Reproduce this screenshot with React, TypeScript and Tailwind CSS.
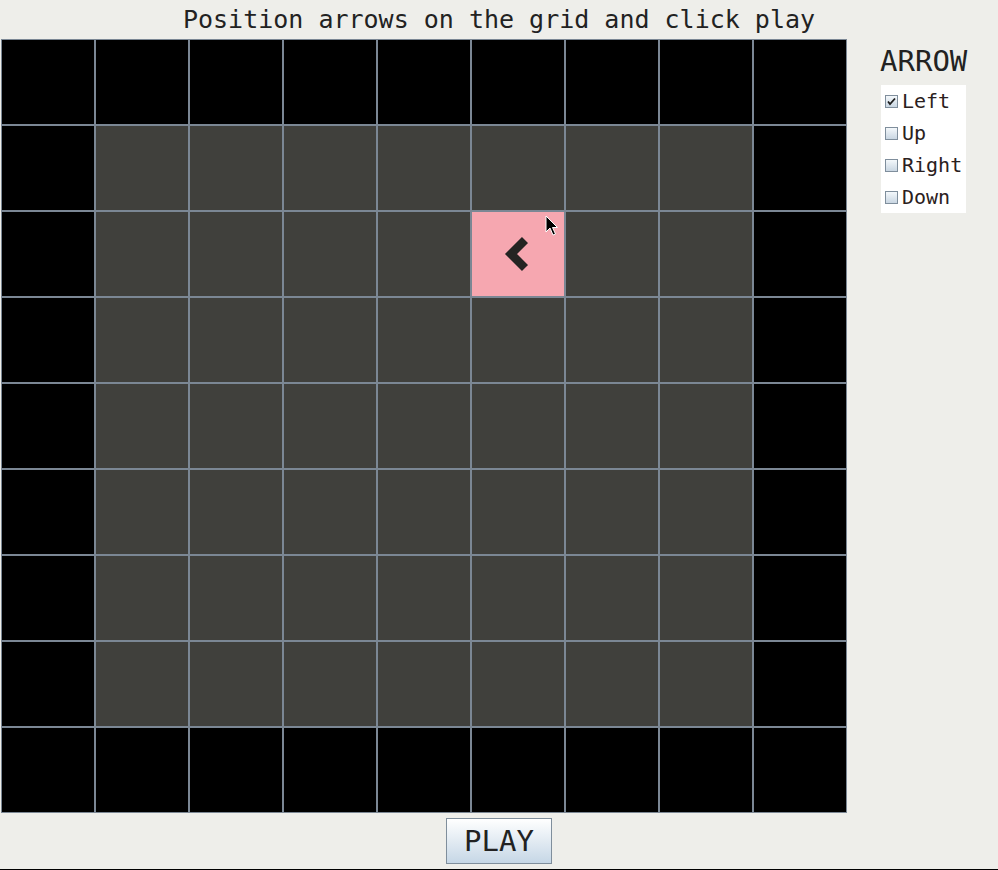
import React, { useState } from "react";

const ROWS = 9;
const COLS = 9;

type Dir = "Left" | "Up" | "Right" | "Down";

const mono = { fontFamily: '"DejaVu Sans Mono", "Liberation Mono", monospace' };

function Chevron() {
  return (
    <svg width="40" height="40" viewBox="0 0 40 40" className="block">
      <polyline
        points="27,6 13,20 27,34"
        fill="none"
        stroke="#242422"
        strokeWidth="8.5"
        strokeLinejoin="miter"
        strokeLinecap="butt"
      />
    </svg>
  );
}

function Cursor() {
  return (
    <svg width="14" height="22" viewBox="0 0 14 22" className="absolute left-[73px] top-[3px]">
      <path d="M1 1 L1 17 L5 13 L8 20 L10.5 19 L7.5 12.5 L12.5 12.5 Z" fill="#000" stroke="#fff" strokeWidth="1" />
    </svg>
  );
}

function CheckBox({ label, checked, onClick }: { label: Dir; checked: boolean; onClick: () => void }) {
  return (
    <div className="flex h-[32px] items-center cursor-default" onClick={onClick}>
      <div className="ml-[4px] mr-[4px] flex h-[13px] w-[13px] items-center justify-center border border-[#7f8e9c] bg-gradient-to-b from-[#f4f8fb] to-[#c9d6e2]">
        {checked && (
          <svg width="9" height="9" viewBox="0 0 9 9">
            <path d="M1 4.5 L3 7 L8 1.5" fill="none" stroke="#1d1d1d" strokeWidth="1.8" />
          </svg>
        )}
      </div>
      <span className="text-[20px] leading-none text-[#2a2020]" style={mono}>
        {label}
      </span>
    </div>
  );
}

export default function App() {
  const [dir, setDir] = useState<Dir>("Left");

  const cellColor = (r: number, c: number) => {
    if (r === 2 && c === 5) return "bg-[#f6a7b0]";
    if (r === 0 || c === 0 || r === ROWS - 1 || c === COLS - 1) return "bg-black";
    return "bg-[#40403c]";
  };

  return (
    <div className="flex h-[870px] w-[998px] flex-col overflow-hidden bg-[#eeeeea] border-b border-black">
      <div className="flex h-[39px] items-center justify-center text-[25px] leading-none text-[#222]" style={mono}>
        Position arrows on the grid and click play
      </div>
      <div className="flex">
        <div className="ml-[1px] grid grid-cols-[repeat(9,94px)] grid-rows-[repeat(9,86px)]">
          {Array.from({ length: ROWS * COLS }).map((_, i) => {
            const r = Math.floor(i / COLS);
            const c = i % COLS;
            const active = r === 2 && c === 5;
            return (
              <div
                key={i}
                className={`relative flex items-center justify-center border border-[#7b8794] ${cellColor(r, c)}`}
              >
                {active && <Chevron />}
                {active && <Cursor />}
              </div>
            );
          })}
        </div>
        <div className="ml-[33px] flex flex-col">
          <div className="mt-[8px] h-[38px] text-[29px] leading-none text-[#222]" style={mono}>
            ARROW
          </div>
          <div className="ml-[1px] w-[85px] bg-white">
            {(["Left", "Up", "Right", "Down"] as Dir[]).map((d) => (
              <CheckBox key={d} label={d} checked={dir === d} onClick={() => setDir(d)} />
            ))}
          </div>
        </div>
      </div>
      <div className="flex justify-center pt-[5px]">
        <button
          className="flex h-[46px] w-[106px] items-center justify-center border border-[#7f8e9c] bg-gradient-to-b from-white to-[#c6d7e6] text-[29px] leading-none text-[#222]"
          style={mono}
        >
          PLAY
        </button>
      </div>
    </div>
  );
}
